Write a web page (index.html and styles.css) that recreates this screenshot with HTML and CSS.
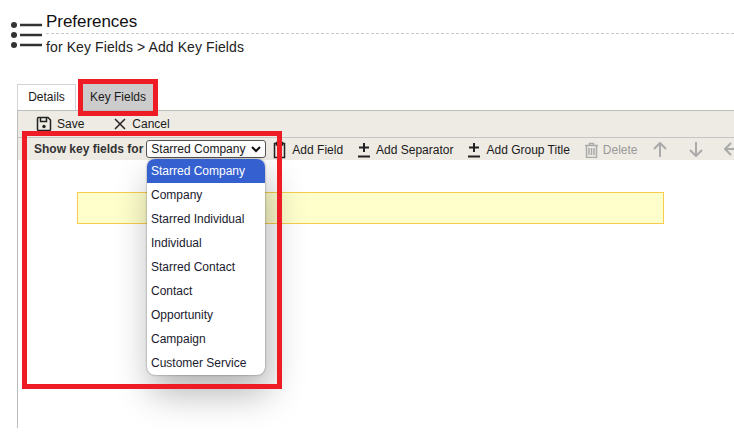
FILE: index.html
```html
<!DOCTYPE html>
<html lang="en">

<head>
    <meta charset="UTF-8">
    <title>Preferences</title>
    <link rel="stylesheet" href="styles.css">
</head>

<body>
    <div class="page_head">
        <svg class="list_icon" width="32" height="30" viewBox="0 0 32 30">
            <circle cx="3" cy="5" r="3"></circle>
            <circle cx="3" cy="15" r="3"></circle>
            <circle cx="3" cy="25" r="3"></circle>
            <path d="M9 5H31M9 15H31M9 25H31"></path>
        </svg>
        <div class="titles">
            <div class="title">Preferences</div>
            <div class="subtitle">for Key Fields &gt; Add Key Fields</div>
        </div>
    </div>

    <div class="tabs">
        <div class="tab">Details</div>
        <div class="tab active">Key Fields</div>
    </div>

    <div class="panel">
        <div class="bar save_bar">
            <div class="btn">
                <svg width="16" height="16" viewBox="0 0 16 16">
                    <path class="line" d="M2 1.500H12L14.500 4V13.500Q14.500 14.500 13.500 14.500H2.500Q1.500 14.500 1.500 13.500V2.500Q1.500 1.500 2.500 1.500Z"></path>
                    <path class="line" d="M4.500 2V5.500H10.500V2"></path>
                    <circle cx="8" cy="10.500" r="1.700"></circle>
                </svg>
                Save
            </div>
            <div class="btn cancel">
                <svg width="14" height="14" viewBox="0 0 14 14">
                    <path class="line" d="M2 2L12 12M12 2L2 12"></path>
                </svg>
                Cancel
            </div>
        </div>
        <div class="bar field_bar">
            <b class="for_label">Show key fields for</b>
            <div class="select_box">
                Starred Company
                <svg width="10" height="7" viewBox="0 0 10 7">
                    <path class="chev" d="M1 1L5 5L9 1"></path>
                </svg>
            </div>
            <div class="btn add_field">
                <svg width="13" height="18" viewBox="0 0 13 18">
                    <path class="line" d="M3 2.500H1.500V16.500H11.500V2.500H10M3.500 1.500H9.500V4H3.500ZM6.500 9V12M5 10.500H8"></path>
                </svg>
                Add Field
            </div>
            <div class="btn add_sep">
                <svg width="12" height="16" viewBox="0 0 12 16">
                    <path class="line thick" d="M6 1V10M1 5.500H11M0 14.500H12"></path>
                </svg>
                Add Separator
            </div>
            <div class="btn add_group">
                <svg width="12" height="16" viewBox="0 0 12 16">
                    <path class="line thick" d="M6 1V10M1 5.500H11M0 14.500H12"></path>
                </svg>
                Add Group Title
            </div>
            <div class="btn off del">
                <svg width="13" height="16" viewBox="0 0 13 16">
                    <path class="line" d="M0 3.500H13M4.500 3V1.500H8.500V3M1.500 3.500V15.500H11.500V3.500M4 6V13M6.500 6V13M9 6V13"></path>
                </svg>
                Delete
            </div>
            <svg class="arrow up" width="14" height="15" viewBox="0 0 14 15">
                <path class="line arrow_line" d="M7 15V1M1 7L7 1L13 7"></path>
            </svg>
            <svg class="arrow down" width="14" height="15" viewBox="0 0 14 15">
                <path class="line arrow_line" d="M7 0V14M1 8L7 14L13 8"></path>
            </svg>
            <svg class="arrow left" width="15" height="14" viewBox="0 0 15 14">
                <path class="line arrow_line" d="M15 7H1M7 1L1 7L7 13"></path>
            </svg>
        </div>
        <div class="body_area">
            <div class="notice"></div>
        </div>
    </div>

    <div class="dropdown">
        <div class="opt selected">Starred Company</div>
        <div class="opt">Company</div>
        <div class="opt">Starred Individual</div>
        <div class="opt">Individual</div>
        <div class="opt">Starred Contact</div>
        <div class="opt">Contact</div>
        <div class="opt">Opportunity</div>
        <div class="opt">Campaign</div>
        <div class="opt">Customer Service</div>
    </div>

    <div class="mark mark_tab"></div>
    <div class="mark mark_list"></div>
</body>

</html>
```
FILE: styles.css
```css
html {
    overflow: hidden;
}

body {
    margin: 0px;
    height: 437px;
    overflow: hidden;
    background-color: #ffffff;
    color: #1a1a1a;
    font-family: "Liberation Sans", Arial, sans-serif;
    font-size: 12px;
}

.page_head {
    display: flex;
    padding: 12px 0 0 11px;
    height: 84px;
    box-sizing: border-box;
}

.list_icon {
    margin-top: 8px;
    margin-right: 3px;
    flex-shrink: 0;
}

.list_icon circle {
    fill: #333333;
}

.list_icon path {
    stroke: #333333;
    stroke-width: 2.400;
    fill: none;
}

.titles {
    flex: 1;
}

.title {
    font-size: 17px;
    line-height: 20px;
    height: 21px;
    border-bottom: 1px dashed #c8c8c8;
    color: #111111;
    letter-spacing: -0.050px;
}

.subtitle {
    font-size: 14px;
    line-height: 16px;
    margin-top: 5px;
    color: #222222;
    letter-spacing: 0.100px;
}

.tabs {
    display: flex;
    gap: 7px;
    margin-left: 17px;
    height: 26px;
}

.tab {
    width: 59px;
    box-sizing: border-box;
    border: 1px solid #d4d4d4;
    border-bottom: none;
    text-align: center;
    line-height: 25px;
}

.tab.active {
    width: 70px;
    background-color: #cccccc;
    border-color: #cccccc;
}

.panel {
    margin-left: 17px;
    height: 317px;
    border-left: 1px solid #bdbdbd;
    border-top: 1px solid #bdbdbd;
}

.bar {
    display: flex;
    align-items: center;
    background-color: #eeebe4;
    white-space: nowrap;
}

.bar > * {
    flex-shrink: 0;
}

.save_bar {
    height: 26px;
    border-bottom: 1px solid #c4c4c4;
    padding-left: 18px;
}

.field_bar {
    height: 22px;
    padding-left: 16px;
}

.field_bar .btn {
    padding-top: 1px;
}

.btn {
    display: flex;
    align-items: center;
    gap: 5px;
}

.cancel {
    margin-left: 29px;
}

.line {
    fill: none;
    stroke: #222222;
    stroke-width: 1.500;
}

.thick {
    stroke-width: 2;
}

.save_bar circle {
    fill: #222222;
}

.for_label {
    margin-right: 3px;
    color: #333333;
}

.select_box {
    display: flex;
    align-items: center;
    justify-content: space-between;
    width: 120px;
    height: 18px;
    box-sizing: border-box;
    padding: 0 4px 0 4px;
    background-color: #ffffff;
    border: 1px solid #555555;
    border-radius: 3px;
}

.chev {
    fill: none;
    stroke: #111111;
    stroke-width: 2;
}

.add_field {
    margin-left: 7px;
    gap: 6px;
}

.add_sep {
    margin-left: 15px;
    gap: 6px;
}

.add_group {
    margin-left: 15px;
    gap: 6px;
}

.del {
    margin-left: 15px;
}

.off {
    color: #999999;
}

.off .line, .arrow_line {
    stroke: #aaaaaa;
}

.arrow_line {
    stroke-width: 2;
}

.up {
    margin-left: 15px;
}

.down {
    margin-left: 22px;
}

.left {
    margin-left: 21px;
}

.body_area {
    padding: 32px 0 0 59px;
}

.notice {
    width: 587px;
    height: 32px;
    box-sizing: border-box;
    background-color: #ffffcc;
    border: 1px solid #f7cc4f;
}

.dropdown {
    position: absolute;
    left: 147px;
    top: 159px;
    width: 118px;
    height: 216px;
    overflow: hidden;
    background-color: #ffffff;
    border-radius: 8px;
    box-shadow: 0 0 2px rgba(0, 0, 0, 0.5), 4px 18px 36px rgba(0, 0, 0, 0.3);
}

.opt {
    height: 24px;
    line-height: 24px;
    padding-left: 4px;
    color: #1a1a2e;
}

.selected {
    background-color: #3561d0;
    color: #ffffff;
}

.mark {
    position: absolute;
    box-sizing: border-box;
    border: 5px solid #ee1c25;
}

.mark_tab {
    left: 78px;
    top: 79px;
    width: 80px;
    height: 37px;
}

.mark_list {
    left: 22px;
    top: 131px;
    width: 260px;
    height: 258px;
}
```
